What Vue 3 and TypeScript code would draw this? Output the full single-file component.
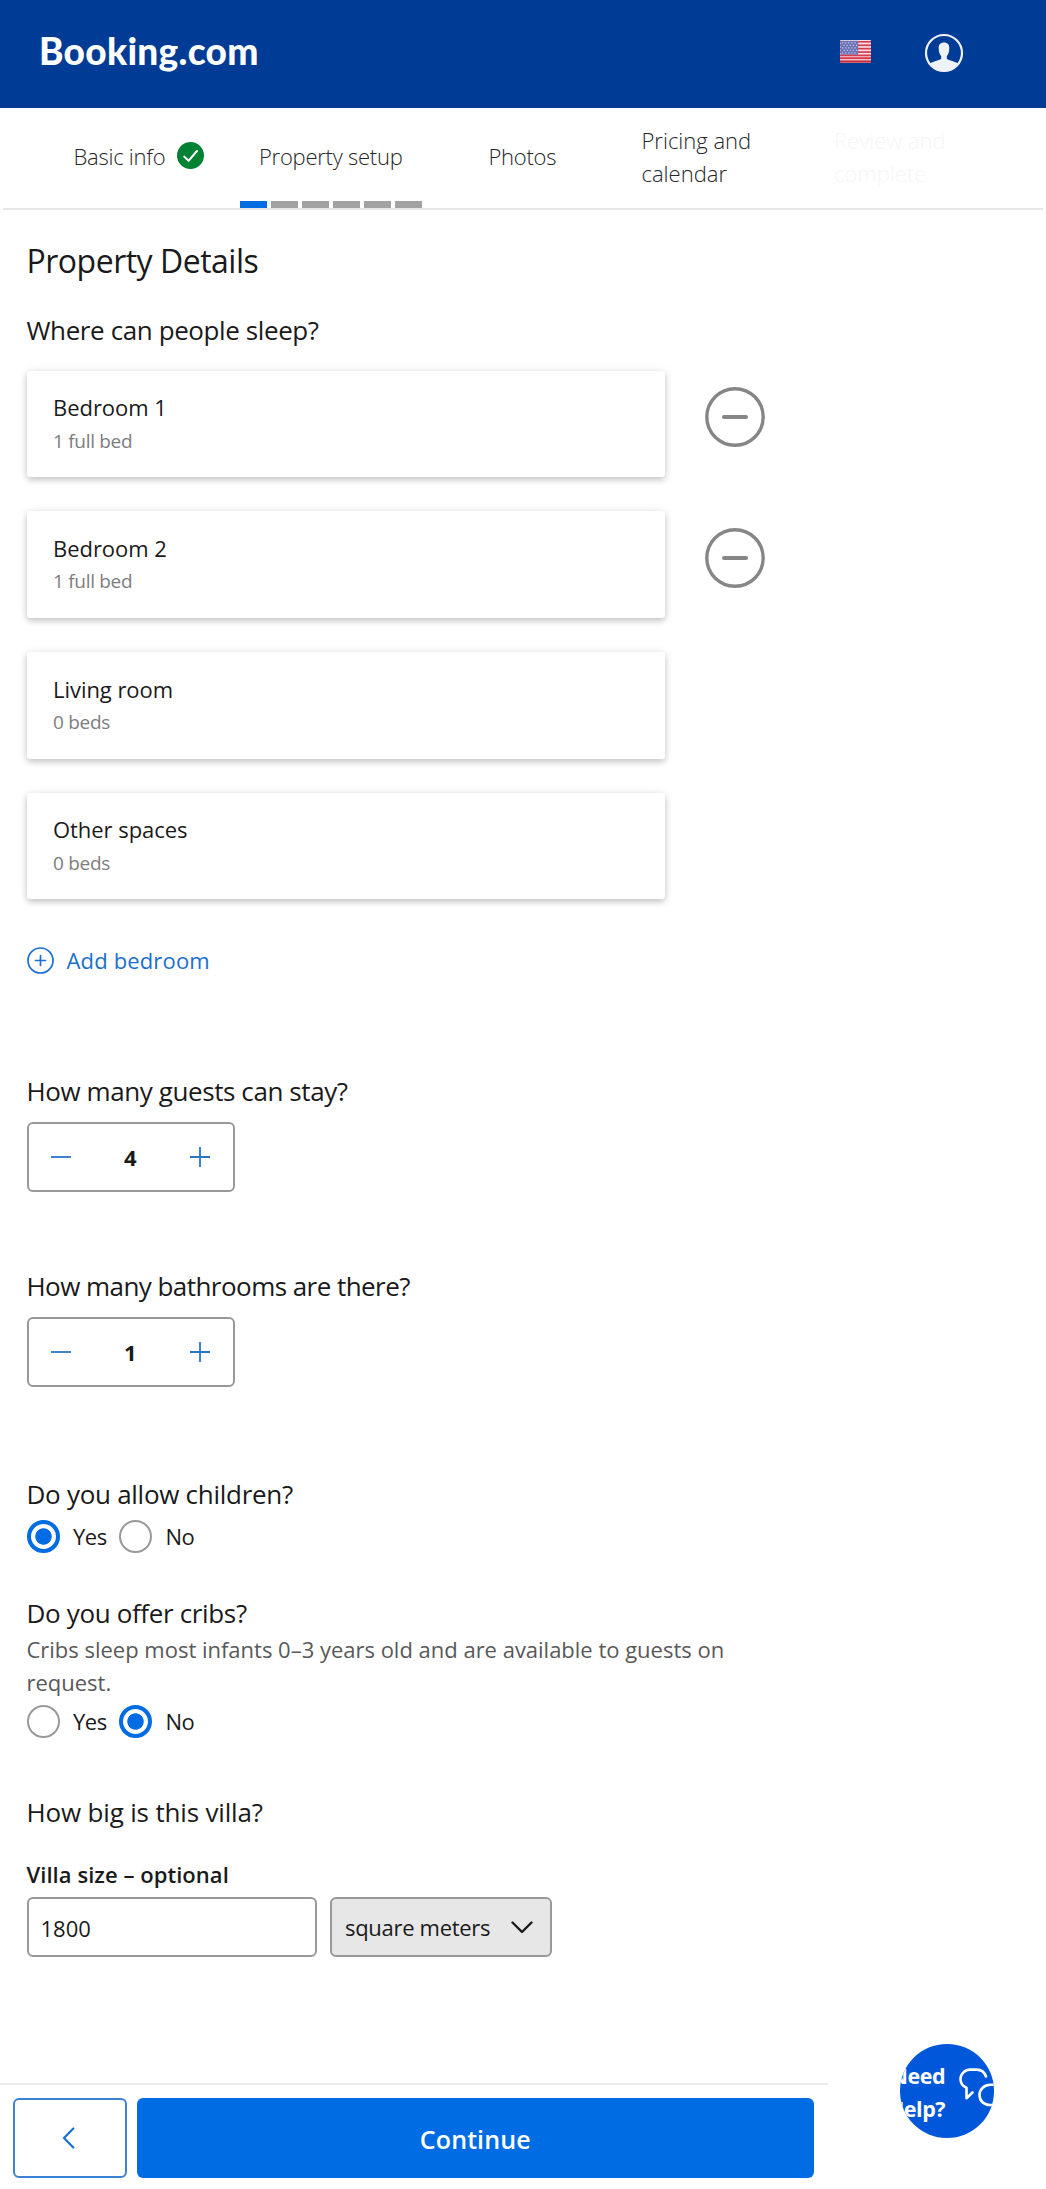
<script setup lang="ts">
import { ref } from 'vue'

interface Tab { label: string; cls: string; done?: boolean; steps?: number }
interface Room { name: string; beds: string; removable: boolean }
interface Counter { label: string; track: string; value: number; cls: string }
interface Choice { label: string; track: string; hint?: string; answer: string; cls: string }

const tabs: Tab[] = [
  { label: 'Basic info', cls: 'basic', done: true },
  { label: 'Property setup', cls: 'setup', steps: 6 },
  { label: 'Photos', cls: 'photos' },
  { label: 'Pricing and calendar', cls: 'pricing' },
  { label: 'Review and complete', cls: 'review' },
]

const rooms: Room[] = [
  { name: 'Bedroom 1', beds: '1 full bed', removable: true },
  { name: 'Bedroom 2', beds: '1 full bed', removable: true },
  { name: 'Living room', beds: '0 beds', removable: false },
  { name: 'Other spaces', beds: '0 beds', removable: false },
]

const counters = ref<Counter[]>([
  { label: 'How many guests can stay?', track: '-0.41px', value: 4, cls: 'guests' },
  { label: 'How many bathrooms are there?', track: '-0.55px', value: 1, cls: 'baths' },
])

const choices = ref<Choice[]>([
  { label: 'Do you allow children?', track: '-0.28px', answer: 'Yes', cls: 'children' },
  {
    label: 'Do you offer cribs?',
    track: '-0.35px',
    hint: 'Cribs sleep most infants 0–3 years old and are available to guests on request.',
    answer: 'No',
    cls: 'cribs',
  },
])

const size = ref('1800')
</script>

<template>
  <div class="page">
    <header class="topbar">
      <span class="logo">Booking.com</span>
      <div class="tools">
        <svg class="flag" width="31" height="23" viewBox="0 0 31 23">
          <rect width="31" height="23" rx="1" fill="#f5dfe6" />
          <g fill="#d93b4c">
            <rect y="1" width="31" height="1.6" />
            <rect y="4.4" width="31" height="1.7" />
            <rect y="7.8" width="31" height="1.7" />
            <rect y="11.2" width="31" height="1.7" />
            <rect y="14.5" width="31" height="1.8" />
            <rect y="17.2" width="31" height="2" />
            <rect y="20.4" width="31" height="2.3" fill="#c62b3e" />
          </g>
          <rect x="0.6" y="0.8" width="17.6" height="13.8" fill="#6a72b8" />
          <g stroke="#c9cdea" stroke-width="1.2" stroke-dasharray="1.2 1.9">
            <path d="M2 2.8h15M3.5 5.3h14M2 7.8h15M3.5 10.3h14M2 12.8h15" />
          </g>
        </svg>
        <svg class="user" width="40" height="40" viewBox="0 0 40 40">
          <circle cx="20" cy="20" r="18" fill="none" stroke="#eef3fb" stroke-width="2.2" />
          <path
            fill="#eef3fb"
            d="M20 9.4c-3.6 0-5.5 2.2-5.3 5.6.1 3.6.7 6.200 2.500 8.200v2.600c-1.200 1.700-7.500 2.300-11 4.600C9.200 35.300 14 38 20 38s10.800-2.700 13.800-7.600c-3.500-2.300-9.800-2.900-11-4.600v-2.600c1.800-2 2.400-4.600 2.500-8.200.2-3.400-1.700-5.600-5.300-5.600z"
          />
        </svg>
      </div>
    </header>

    <nav class="tabs">
      <div v-for="tab in tabs" :key="tab.label" class="tab" :class="tab.cls">
        <span class="tab-label">{{ tab.label }}</span>
        <svg v-if="tab.done" class="check" width="27" height="27" viewBox="0 0 27 27">
          <circle cx="13.500" cy="13.500" r="13.500" fill="#008234" />
          <path d="M7.200 14.600l4.300 4.200 8.500-9.800" fill="none" stroke="#fff" stroke-width="2" stroke-linecap="round" stroke-linejoin="round" />
        </svg>
        <div v-if="tab.steps" class="steps">
          <i v-for="n in tab.steps" :key="n" :class="{ on: n === 1 }"></i>
        </div>
      </div>
    </nav>

    <main class="content">
      <h1>Property Details</h1>
      <h2 class="where">Where can people sleep?</h2>

      <div class="rooms">
        <div v-for="room in rooms" :key="room.name" class="room-row">
          <div class="room">
            <div class="room-name">{{ room.name }}</div>
            <div class="room-beds">{{ room.beds }}</div>
          </div>
          <svg v-if="room.removable" class="remove" width="60" height="60" viewBox="0 0 60 60">
            <circle cx="30" cy="30" r="28.200" fill="none" stroke="#868686" stroke-width="3.400" />
            <path d="M19 30h22" stroke="#868686" stroke-width="4" stroke-linecap="round" />
          </svg>
        </div>
      </div>

      <a class="add">
        <svg width="27" height="27" viewBox="0 0 27 27" fill="none" stroke="#1a6fd0" stroke-width="1.700" stroke-linecap="round">
          <circle cx="13.500" cy="13.500" r="12.500" />
          <path d="M8.500 13.500h10M13.500 8.500v10" />
        </svg>
        <span>Add bedroom</span>
      </a>

      <section v-for="c in counters" :key="c.label" :class="c.cls">
        <h2 :style="{ letterSpacing: c.track }">{{ c.label }}</h2>
        <div class="stepper">
          <svg width="20" height="20" viewBox="0 0 20 20" @click="c.value--"><path d="M0 10h20" stroke="#2a76c6" stroke-width="1.800" /></svg>
          <b>{{ c.value }}</b>
          <svg width="20" height="20" viewBox="0 0 20 20" @click="c.value++"><path d="M0 10h20M10 0v20" stroke="#2a76c6" stroke-width="1.800" /></svg>
        </div>
      </section>

      <section v-for="q in choices" :key="q.label" :class="q.cls">
        <h2 :style="{ letterSpacing: q.track }">{{ q.label }}</h2>
        <p v-if="q.hint" class="hint">{{ q.hint }}</p>
        <div class="radios">
          <label v-for="opt in ['Yes', 'No']" :key="opt" :class="opt.toLowerCase()" @click="q.answer = opt">
            <span class="dot" :class="{ on: q.answer === opt }"></span>
            <span class="opt">{{ opt }}</span>
          </label>
        </div>
      </section>

      <section class="villa">
        <h2>How big is this villa?</h2>
        <div class="size-label">Villa size – optional</div>
        <div class="size-row">
          <input v-model="size" class="size" type="text" />
          <div class="unit">
            <span>square meters</span>
            <svg width="22" height="13" viewBox="0 0 22 13"><path d="M1.500 1.500L11 11l9.500-9.500" fill="none" stroke="#1a1a1a" stroke-width="2.400" stroke-linecap="round" stroke-linejoin="round" /></svg>
          </div>
        </div>
      </section>
    </main>

    <footer class="actions">
      <button class="back">
        <svg width="13" height="22" viewBox="0 0 13 22"><path d="M11.300 1.500L2 11l9.300 9.500" fill="none" stroke="#1a6fd0" stroke-width="2.200" stroke-linecap="round" stroke-linejoin="round" /></svg>
      </button>
      <button class="next">Continue</button>
    </footer>

    <div class="help">
      <span class="help-text">Need<br />Help?</span>
      <svg class="bubbles" width="94" height="94" viewBox="0 0 94 94" fill="none" stroke="#fff" stroke-width="2.600" stroke-linecap="round" stroke-linejoin="round">
        <path d="M86 32.500c-1.400-4.300-5-6.900-9.300-6.900h-6.400c-5.400 0-9.800 4.200-9.800 9.400 0 4.600 2.300 7.200 6 8.700v10.600l6-5.800" />
        <path d="M96 40.800h-5.500c-6.200 0-11 4.300-11 10.200s4.600 10 10.500 10h6" />
      </svg>
    </div>
  </div>
</template>

<style>
body { margin: 0; background: #fff; }
</style>

<style scoped>
.page {
  position: relative;
  display: flex;
  flex-direction: column;
  width: 1046px;
  height: 2189px;
  overflow: hidden;
  background: #fff;
  color: #1a1a1a;
  font-family: 'Open Sans', 'Noto Sans', sans-serif;
  font-size: 22px;
  line-height: 33px;
}
.page * { box-sizing: border-box; }

.topbar {
  display: flex;
  justify-content: space-between;
  align-items: flex-start;
  flex: none;
  height: 107.500px;
  padding: 29px 82.500px 0 39px;
  background: #003b95;
}
.logo {
  color: #fff;
  font: 900 37px/44px Lato, sans-serif;
  letter-spacing: 0.3px;
}
.tools { display: flex; align-items: center; gap: 53px; margin-top: 3.500px; }
.flag { margin-top: -2px; }

.tabs {
  display: flex;
  flex: none;
  height: 102.500px;
  margin: 0 3px;
  border-bottom: 2px solid #e7e7e7;
  color: #262626;
  font-weight: 300;
  letter-spacing: -0.25px;
}
.tab { display: flex; align-items: flex-start; padding-top: 32px; }
.tab-label { white-space: nowrap; }
.basic { width: 237px; padding-left: 70.500px; }
.check { margin: 2.500px 0 0 12px; }
.setup { flex-direction: column; justify-content: space-between; width: 182px; }
.setup .tab-label { padding-left: 19px; }
.steps { display: flex; gap: 3.600px; width: 182px; height: 7px; }
.steps i { flex: 1; background: #a2a2a2; }
.steps i.on { background: #006ce4; }
.photos { width: 219.500px; padding-left: 66.500px; }
.pricing, .review { padding-top: 16px; letter-spacing: 0; }
.pricing .tab-label, .review .tab-label { width: 118px; white-space: normal; }
.pricing { width: 192.500px; }
.review { color: #f6f6f6; }

.content { flex: 1; padding: 29px 0 0 26.500px; }
h1 { margin: 0; font-size: 32px; line-height: 44px; font-weight: 400; letter-spacing: -0.5px; }
h2 { margin: 0; font-size: 26px; line-height: 36px; font-weight: 400; white-space: nowrap; }
.where { margin-top: 29px; letter-spacing: -0.4px; }

.rooms { display: flex; flex-direction: column; gap: 34.200px; margin-top: 22.500px; }
.room-row { display: flex; align-items: flex-start; gap: 39.500px; }
.room {
  width: 638.500px;
  height: 106.600px;
  padding: 20.500px 26.500px 0;
  border-radius: 3px;
  background: #fff;
  box-shadow: 0 3px 6px rgba(0, 0, 0, 0.2), 0 0 11px rgba(0, 0, 0, 0.07);
}
.room-name { letter-spacing: -0.05px; }
.room-beds { margin-top: 2.500px; color: #7d7d7d; font-size: 19px; line-height: 28px; letter-spacing: -0.3px; }
.remove { margin-top: 16.500px; }

.add { display: flex; align-items: center; gap: 13px; margin-top: 45px; color: #1a6fd0; letter-spacing: 0.15px; }
.add svg { margin-top: -1px; }

.guests { margin-top: 95.500px; }
.baths { margin-top: 75.500px; }
.stepper {
  display: flex;
  align-items: center;
  justify-content: space-between;
  width: 208.500px;
  height: 70px;
  margin-top: 13.500px;
  padding: 0 23.500px 0 22.500px;
  border: 2px solid #999;
  border-radius: 6px;
}
.stepper b { font-weight: 700; }

.children { margin-top: 88.500px; }
.cribs { margin-top: 42px; }
.hint { width: 720px; margin: 2px 0 0; color: #595959; letter-spacing: -0.01px; }
.radios { display: flex; margin-top: 8px; }
.hint + .radios { margin-top: 6px; }
.radios label { display: flex; align-items: flex-start; height: 33px; }
.radios .yes { width: 92.500px; }
.dot { width: 33px; height: 33px; border: 2px solid #999; border-radius: 50%; }
.dot.on { border: 4px solid #006ce4; background: radial-gradient(circle, #006ce4 7.800px, #fff 8.600px); }
.opt { margin-left: 13.500px; letter-spacing: -0.5px; }

.villa { margin-top: 56px; }
.villa h2 { letter-spacing: -0.17px; }
.size-label { margin-top: 28px; font-weight: 600; letter-spacing: 0.05px; }
.size-row { display: flex; gap: 13.500px; margin-top: 6.500px; }
.size, .unit { height: 59.500px; border: 2px solid #999; border-radius: 6px; }
.size { width: 290px; padding: 1px 12px 0; background: #fff; color: #1a1a1a; font: inherit; outline: 0; }
.unit {
  display: flex;
  align-items: center;
  justify-content: space-between;
  width: 221.500px;
  padding: 0 17px 0 13px;
  background: #e7e7e7;
  letter-spacing: -0.3px;
}
.unit span { padding-top: 1px; }

.actions {
  display: flex;
  flex: none;
  gap: 9.500px;
  width: 827.500px;
  height: 106px;
  padding: 13px 13.500px 0 13px;
  border-top: 2px solid #ebebeb;
}
.actions button { height: 80px; padding: 0; border-radius: 6px; font: 600 25px/36px 'Open Sans', sans-serif; }
.actions .back { display: flex; align-items: center; justify-content: center; width: 114px; border: 2px solid #3a83d4; background: #fff; }
.back svg { margin-right: 3px; }
.actions .next { flex: 1; padding-top: 1px; border: 0; background: #006ce4; color: #fff; letter-spacing: 0.1px; }

.help {
  position: absolute;
  left: 900px;
  top: 2044px;
  width: 93.500px;
  height: 93.500px;
  overflow: hidden;
  border-radius: 50%;
  background: #0057d9;
  color: #fff;
}
.help-text {
  position: absolute;
  top: 14.500px;
  right: 48.500px;
  width: 65px;
  font-size: 21.500px;
  font-weight: 700;
  letter-spacing: -0.5px;
  text-align: right;
}
.bubbles { position: absolute; left: 0; top: 0; }
</style>
